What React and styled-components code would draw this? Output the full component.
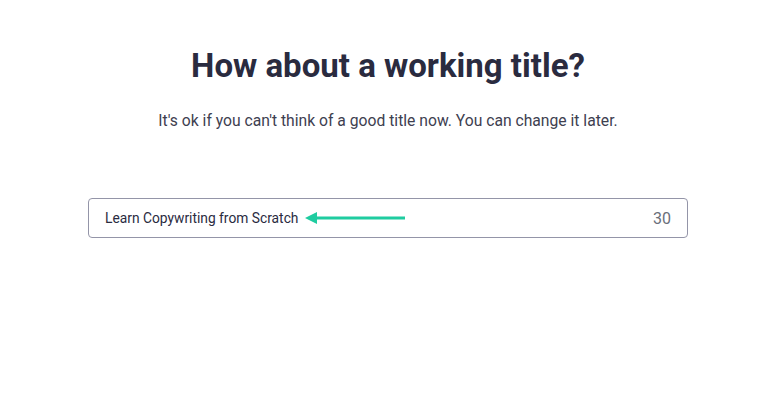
import React from "react";
import styled, { createGlobalStyle } from "styled-components";

const Global = createGlobalStyle`
  html, body { margin: 0; padding: 0; background: #fff; }
  body { font-family: Roboto, "Liberation Sans", sans-serif; color: #2a2b3f; }
`;

const Page = styled.main`
  display: flex;
  flex-direction: column;
  align-items: center;
  padding: 46px 0 0 4px;
  width: 772px;
  height: 416px;
  box-sizing: border-box;
`;

const Title = styled.h1`
  margin: 0;
  font-family: Roboto, sans-serif;
  font-weight: 700;
  font-size: 33px;
  line-height: 40px;
  color: #2a2b3f;
`;

const Subtitle = styled.p`
  margin: 24px 0 0;
  font-size: 15.7px;
  line-height: 22px;
  color: #3e4050;
`;

const Field = styled.div`
  margin-top: 66px;
  width: 600px;
  height: 40px;
  box-sizing: border-box;
  border: 1px solid #9495a8;
  border-radius: 4px;
  display: flex;
  align-items: center;
  padding: 0 16px;
  gap: 7px;
`;

const Value = styled.span`
  font-size: 13.8px;
  color: #2a2b3f;
`;

const Counter = styled.span`
  margin-left: auto;
  font-size: 16px;
  color: #6a6f7a;
`;

const Arrow = () => (
  <svg width="100" height="14" viewBox="0 0 100 14">
    <path d="M0 7 L12 1 L12 13 Z" fill="#1fcca0" />
    <rect x="10" y="5.5" width="90" height="3" fill="#1fcca0" />
  </svg>
);

export default function App() {
  return (
    <>
      <Global />
      <Page>
        <Title>How about a working title?</Title>
        <Subtitle>It's ok if you can't think of a good title now. You can change it later.</Subtitle>
        <Field>
          <Value>Learn Copywriting from Scratch</Value>
          <Arrow />
          <Counter>30</Counter>
        </Field>
      </Page>
    </>
  );
}
